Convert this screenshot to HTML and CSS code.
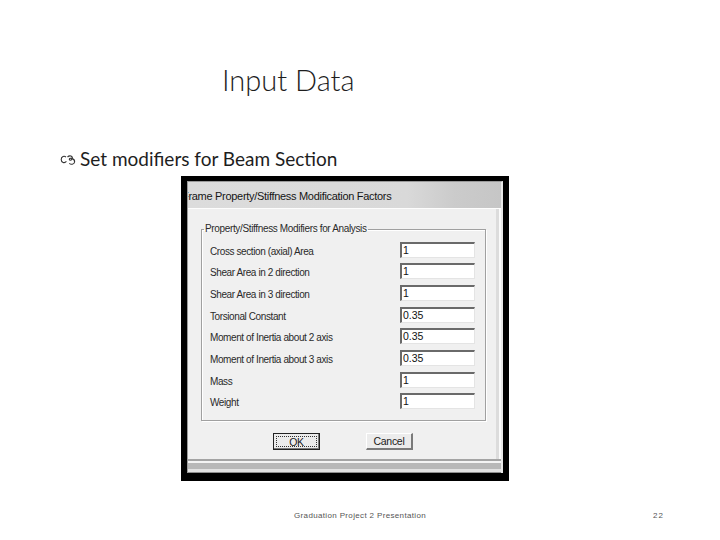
FILE: index.html
```html
<!DOCTYPE html>
<html>
<head>
<meta charset="utf-8">
<link rel="stylesheet" href="styles.css">
</head>
<body>
<div class="slide">
  <h1 class="title">Input Data</h1>
  <div class="bullet">
    <svg class="bullet-icon" width="18" height="12" viewBox="0 0 18 12">
      <path d="M6 3.2 C4.5 1.6 1.2 2.2 1.2 5.6 C1.2 8.6 4.6 9.6 6.4 7.4" fill="none" stroke="#333" stroke-width="1.1"/>
      <path d="M7.5 3 C9.5 1 13 1.8 12.2 4.6 C11.6 6.6 8.8 6.8 9.4 5 C10 3.4 15 4.6 14.6 8 C14.2 10.6 10.6 11 9.4 9.2" fill="none" stroke="#333" stroke-width="1.1"/>
    </svg>
    <span>Set modifiers for Beam Section</span>
  </div>
  <div class="dialog">
    <div class="win">
      <div class="titlebar"><span class="caption">Frame Property/Stiffness Modification Factors</span></div>
      <div class="content">
        <fieldset class="group">
          <legend class="legend">Property/Stiffness Modifiers for Analysis</legend>
          <div class="rows">
            <div class="row"><span class="lbl">Cross section (axial) Area</span><span class="inp">1</span></div>
            <div class="row"><span class="lbl">Shear Area in 2 direction</span><span class="inp">1</span></div>
            <div class="row"><span class="lbl">Shear Area in 3 direction</span><span class="inp">1</span></div>
            <div class="row"><span class="lbl">Torsional Constant</span><span class="inp">0.35</span></div>
            <div class="row"><span class="lbl">Moment of Inertia about 2 axis</span><span class="inp">0.35</span></div>
            <div class="row"><span class="lbl">Moment of Inertia about 3 axis</span><span class="inp">0.35</span></div>
            <div class="row"><span class="lbl">Mass</span><span class="inp">1</span></div>
            <div class="row"><span class="lbl">Weight</span><span class="inp">1</span></div>
          </div>
        </fieldset>
        <div class="buttons">
          <div class="btn btn-default"><span class="focus">OK</span></div>
          <div class="btn">Cancel</div>
        </div>
      </div>
      <div class="bottom"></div>
    </div>
  </div>
  <div class="footer">
    <span class="foot-text">Graduation Project 2 Presentation</span>
    <span class="page-num">22</span>
  </div>
</div>
</body>
</html>
```
FILE: styles.css
```css
html, body {
  margin: 0;
  padding: 0;
  background: #fff;
}
.slide {
  width: 720px;
  height: 540px;
  overflow: hidden;
  font-family: "Lato", "Liberation Sans", sans-serif;
  color: #222;
}
.title {
  margin: 0;
  padding: 62px 0 0 222px;
  font-size: 29px;
  line-height: 36px;
  font-weight: 300;
  color: #1e1e1e;
}
.bullet {
  margin-top: 49px;
  padding-left: 60px;
  display: flex;
  align-items: center;
  gap: 2px;
  font-size: 19px;
  line-height: 24px;
  color: #1e1e1e;
}
.bullet-icon {
  display: block;
  margin-top: 1px;
}
.dialog {
  margin: 5px 0 0 181px;
  width: 328px;
  height: 305px;
  box-sizing: border-box;
  background: #000;
  padding: 5px 6px 8px 6px;
}
.win {
  height: 100%;
  box-sizing: border-box;
  border-left: 1px solid #9a9a9a;
  border-top: 1px solid #9a9a9a;
  border-right: 2px solid #e8e8e8;
  background: #f0f0f0;
  display: flex;
  flex-direction: column;
}
.titlebar {
  height: 26px;
  flex: none;
  background: linear-gradient(to right, #dcdcdc 0%, #d9d9d9 70%, #cbcbcb 85%, #c6c6c6 100%);
  border-bottom: 1px solid #fdfdfd;
  display: flex;
  align-items: center;
  overflow: hidden;
}
.caption {
  font-family: "Liberation Sans", sans-serif;
  font-size: 11px;
  letter-spacing: -0.3px;
  color: #151515;
  white-space: nowrap;
  margin-left: -6px;
  margin-top: 1px;
}
.content {
  flex: 1;
  padding: 14px 0 0 13px;
  border-right: 2px solid #fafafa;
  box-shadow: inset -3px 0 0 #dcdcdc;
  display: flex;
  flex-direction: column;
}
.group {
  margin: 0;
  padding: 5px 10px 0 8px;
  width: 285px;
  height: 198px;
  box-sizing: border-box;
  min-width: 0;
  border: 1px solid #a0a0a0;
  box-shadow: 1px 1px 0 #fff, inset 1px 1px 0 #fff;
}
.legend {
  padding: 0 1px;
  margin-left: -6px;
  font-family: "Liberation Sans", sans-serif;
  font-size: 10px;
  letter-spacing: -0.35px;
  color: #2a2a2a;
  line-height: 12px;
}
.rows {
  display: grid;
  grid-template-rows: repeat(8, 21.67px);
}
.row {
  display: flex;
  align-items: flex-end;
  justify-content: space-between;
  padding-bottom: 4px;
  box-sizing: border-box;
}
.lbl {
  font-family: "Liberation Sans", sans-serif;
  font-size: 10px;
  letter-spacing: -0.4px;
  color: #2a2a2a;
  line-height: 12px;
  margin-bottom: 0;
}
.inp {
  width: 75px;
  height: 16px;
  box-sizing: border-box;
  background: #fff;
  border-top: 2px solid #6a6a6a;
  border-left: 2px solid #6a6a6a;
  border-right: 1px solid #e4e4e4;
  border-bottom: 1px solid #e4e4e4;
  font-family: "Liberation Sans", sans-serif;
  font-size: 10.5px;
  line-height: 13px;
  padding-left: 1px;
  color: #111;
}
.buttons {
  display: flex;
  gap: 46px;
  margin-top: 12px;
  padding-left: 72px;
}
.btn {
  width: 47px;
  height: 17px;
  box-sizing: border-box;
  background: #ececec;
  border-top: 1px solid #fff;
  border-left: 1px solid #fff;
  border-right: 2px solid #7a7a7a;
  border-bottom: 2px solid #7a7a7a;
  font-family: "Liberation Sans", sans-serif;
  font-size: 10.5px;
  letter-spacing: -0.3px;
  line-height: 14px;
  text-align: center;
  color: #1a1a1a;
}
.btn-default {
  border: 1px solid #222;
  box-shadow: inset -1px -1px 0 #7a7a7a;
  padding: 2px;
}
.focus {
  display: block;
  height: 100%;
  box-sizing: border-box;
  border: 1px dotted #333;
  line-height: 10px;
}
.bottom {
  height: 14px;
  flex: none;
  background: linear-gradient(to bottom, #a4a4a4 0 2px, #f4f4f4 2px 4px, #b8b8b8 4px 10px, #e2e2e2 10px 13px, #8e8e8e 13px 14px);
}
.footer {
  display: flex;
  align-items: center;
  margin-top: 28px;
  padding-left: 294px;
  height: 12px;
  font-family: "Liberation Sans", sans-serif;
  font-size: 8px;
  color: #555;
}
.foot-text {
  letter-spacing: 0.35px;
}
.page-num {
  margin-left: auto;
  margin-right: 56px;
  letter-spacing: 1px;
}
```
